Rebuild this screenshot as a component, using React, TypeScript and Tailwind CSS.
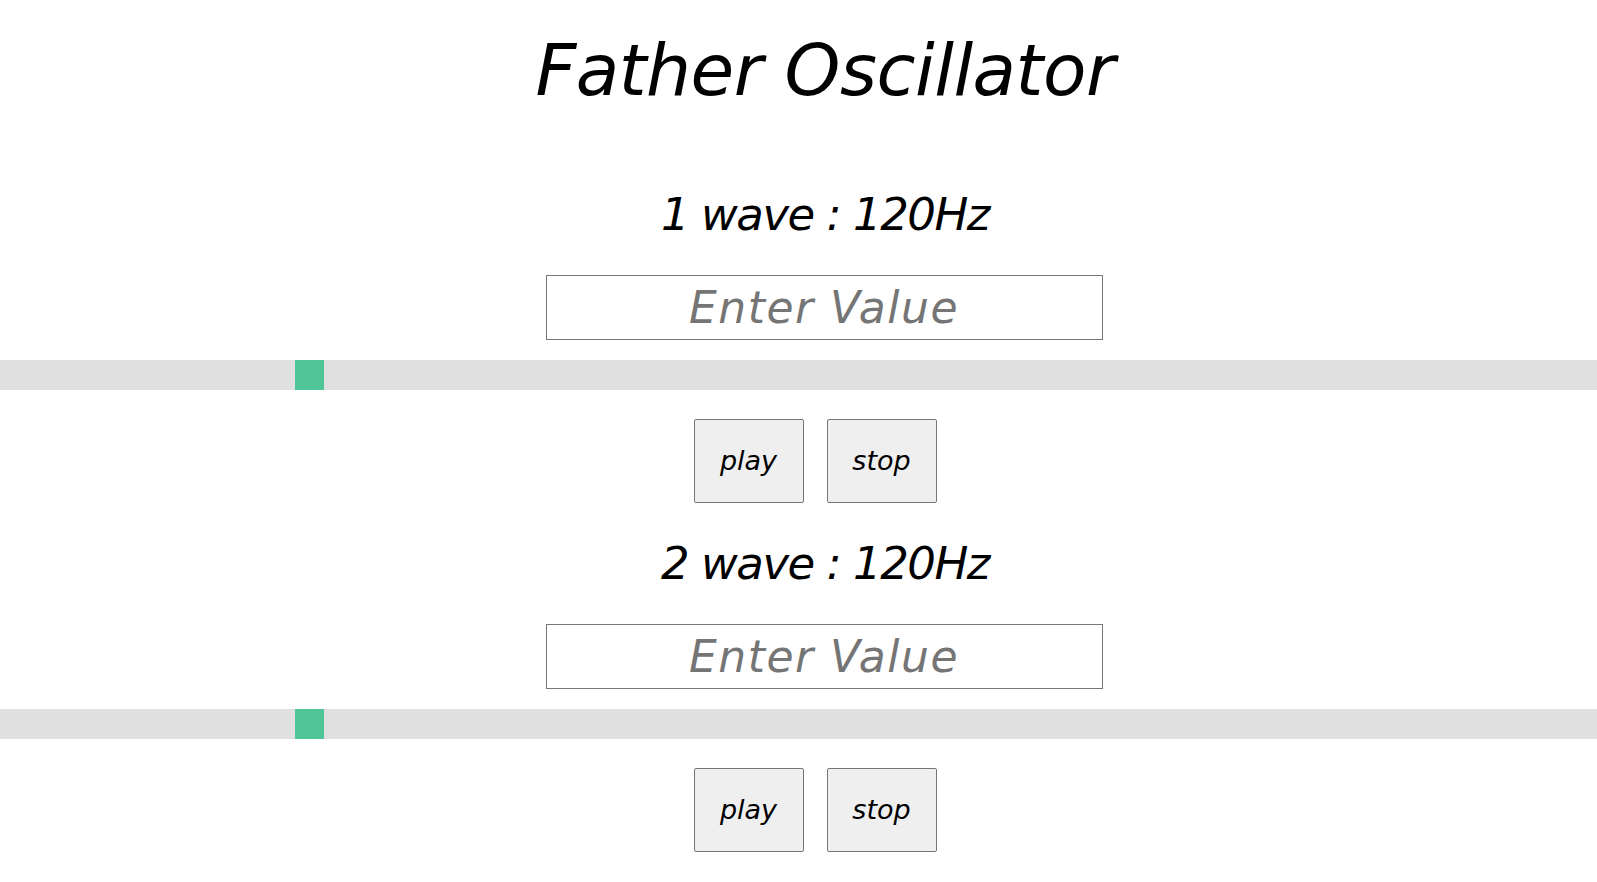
import { useState } from "react";

const font = "font-['DejaVu_Sans',sans-serif] italic";

function Wave({ n }: { n: number }) {
  const [freq] = useState(120);
  return (
    <section className="flex flex-col">
      <div className="pl-[53px] flex justify-center">
        <h2 className="text-[45px] leading-[56px] tracking-[-1.5px] text-black">
          {n} wave : {freq}Hz
        </h2>
      </div>
      <div className="pl-[51px] mt-[32px] flex justify-center">
        <input
          type="text"
          placeholder="Enter Value"
          className={`w-[557px] h-[65px] border border-[#767676] bg-white text-center text-[44px] tracking-[1.5px] text-black placeholder:text-[#757575] outline-none ${font}`}
        />
      </div>
      <div className="mt-[20px] h-[30px] w-full bg-[#e0e0e0] flex">
        <div className="ml-[295px] w-[29px] h-full bg-[#50c598]" />
      </div>
      <div className="pl-[53px] mt-[29px] flex justify-center">
        <div className="flex gap-[23px] pr-[20px]">
          <button className={`w-[110px] h-[84px] bg-[#efefef] border border-[#767676] rounded-[2px] text-[27px] text-black ${font}`}>
            play
          </button>
          <button className={`w-[110px] h-[84px] bg-[#efefef] border border-[#767676] rounded-[2px] text-[27px] text-black ${font}`}>
            stop
          </button>
        </div>
      </div>
    </section>
  );
}

export default function App() {
  return (
    <main className={`min-h-screen bg-white ${font} text-black pb-[40px]`}>
      <div className="pl-[53px] flex justify-center pt-[31px]">
        <h1 className="text-[71px] leading-[80px] tracking-[-0.5px]">Father Oscillator</h1>
      </div>
      <div className="mt-[76px] flex flex-col gap-[33px]">
        <Wave n={1} />
        <Wave n={2} />
      </div>
    </main>
  );
}
